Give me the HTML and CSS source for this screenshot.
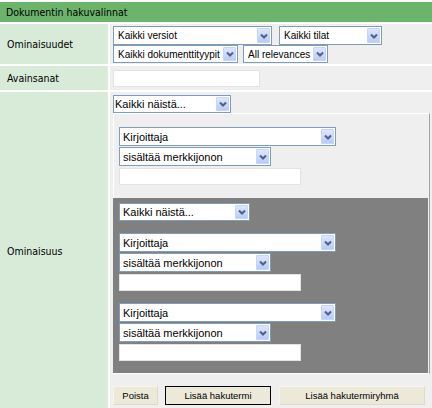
FILE: index.html
```html
<!DOCTYPE html>
<html lang="fi">
<head>
<meta charset="utf-8">
<title>Dokumentin hakuvalinnat</title>
<link rel="stylesheet" href="styles.css">
</head>
<body>
<div class="form">
  <div class="head">Dokumentin hakuvalinnat</div>

  <div class="label">Ominaisuudet</div>
  <div class="cell c1">
    <div class="line">
      <div class="sel small w159"><span>Kaikki versiot</span><i class="arr"><svg width="8" height="6" viewBox="0 0 8 6"><path d="M1 1.5L4 4.5L7 1.5" fill="none" stroke="#4d6185" stroke-width="2"/></svg></i></div>
      <div class="sel small w103 ml7"><span>Kaikki tilat</span><i class="arr"><svg width="8" height="6" viewBox="0 0 8 6"><path d="M1 1.5L4 4.5L7 1.5" fill="none" stroke="#4d6185" stroke-width="2"/></svg></i></div>
    </div>
    <div class="line">
      <div class="sel small h18 w125"><span>Kaikki dokumenttityypit</span><i class="arr"><svg width="8" height="6" viewBox="0 0 8 6"><path d="M1 1.5L4 4.5L7 1.5" fill="none" stroke="#4d6185" stroke-width="2"/></svg></i></div>
      <div class="sel small h18 w85 ml5"><span>All relevances</span><i class="arr"><svg width="8" height="6" viewBox="0 0 8 6"><path d="M1 1.5L4 4.5L7 1.5" fill="none" stroke="#4d6185" stroke-width="2"/></svg></i></div>
    </div>
  </div>

  <div class="label">Avainsanat</div>
  <div class="cell c2">
    <div class="inp w147"></div>
  </div>

  <div class="label">Ominaisuus</div>
  <div class="cell c3">
    <div class="sel arial h18 w118 tight"><span>Kaikki näistä...</span><i class="arr"><svg width="8" height="6" viewBox="0 0 8 6"><path d="M1 1.5L4 4.5L7 1.5" fill="none" stroke="#4d6185" stroke-width="2"/></svg></i></div>
    <div class="group">
      <div class="term">
        <div class="sel arial w217"><span>Kirjoittaja</span><i class="arr"><svg width="8" height="6" viewBox="0 0 8 6"><path d="M1 1.5L4 4.5L7 1.5" fill="none" stroke="#4d6185" stroke-width="2"/></svg></i></div>
        <div class="sel arial w152 second"><span>sisältää merkkijonon</span><i class="arr"><svg width="8" height="6" viewBox="0 0 8 6"><path d="M1 1.5L4 4.5L7 1.5" fill="none" stroke="#4d6185" stroke-width="2"/></svg></i></div>
        <div class="inp w182 third"></div>
      </div>
      <div class="sub">
        <div class="sel arial h18 w131 subsel"><span>Kaikki näistä...</span><i class="arr"><svg width="8" height="6" viewBox="0 0 8 6"><path d="M1 1.5L4 4.5L7 1.5" fill="none" stroke="#4d6185" stroke-width="2"/></svg></i></div>
        <div class="term">
          <div class="sel arial w217"><span>Kirjoittaja</span><i class="arr"><svg width="8" height="6" viewBox="0 0 8 6"><path d="M1 1.5L4 4.5L7 1.5" fill="none" stroke="#4d6185" stroke-width="2"/></svg></i></div>
          <div class="sel arial w152 second"><span>sisältää merkkijonon</span><i class="arr"><svg width="8" height="6" viewBox="0 0 8 6"><path d="M1 1.5L4 4.5L7 1.5" fill="none" stroke="#4d6185" stroke-width="2"/></svg></i></div>
          <div class="inp w182 third"></div>
        </div>
        <div class="term">
          <div class="sel arial w217"><span>Kirjoittaja</span><i class="arr"><svg width="8" height="6" viewBox="0 0 8 6"><path d="M1 1.5L4 4.5L7 1.5" fill="none" stroke="#4d6185" stroke-width="2"/></svg></i></div>
          <div class="sel arial w152 second"><span>sisältää merkkijonon</span><i class="arr"><svg width="8" height="6" viewBox="0 0 8 6"><path d="M1 1.5L4 4.5L7 1.5" fill="none" stroke="#4d6185" stroke-width="2"/></svg></i></div>
          <div class="inp w182 third"></div>
        </div>
      </div>
    </div>
    <div class="btns">
      <div class="btn b45">Poista</div>
      <div class="btn b106 focus">Lisää hakutermi</div>
      <div class="btn b146">Lisää hakutermiryhmä</div>
    </div>
  </div>
</div>
</body>
</html>
```

FILE: styles.css
```css
body {
  margin: 0;
  background: #fff;
  color: #000;
  font-family: "DejaVu Sans Condensed", "Liberation Sans", sans-serif;
  font-size: 10.5px;
}

.form {
  display: grid;
  grid-template-columns: 108px 1fr;
  gap: 2px;
  padding-top: 2px;
}

.head {
  grid-column: 1 / -1;
  background: #6cb36c;
  height: 20px;
  line-height: 20px;
  padding-left: 6px;
}

.label {
  background: #d8ead8;
  display: flex;
  align-items: center;
  padding-left: 7px;
}

.cell {
  background: #efefef;
  padding: 2px 2px 1px 3px;
}

.c2 {
  padding: 4px 3px 3px;
}

.c3 {
  padding: 3px 2px 4px 3px;
}

.line {
  display: flex;
}

.sel {
  display: flex;
  align-items: center;
  box-sizing: border-box;
  height: 19px;
  border: 1px solid #7f9db9;
  background: #fff;
  padding-left: 4px;
}

.sel span {
  flex: 1;
  white-space: nowrap;
  overflow: hidden;
}

.sel.small {
  font-family: "Liberation Sans", Arial, sans-serif;
  font-size: 10px;
  padding-left: 4px;
}

.sel.arial {
  font-family: "Liberation Sans", Arial, sans-serif;
  font-size: 11px;
  padding-left: 3px;
}

.sel.tight {
  padding-left: 1px;
}

.h18 {
  height: 18px;
}

.arr {
  display: flex;
  align-items: center;
  justify-content: center;
  box-sizing: border-box;
  width: 15px;
  height: 100%;
  border: 1px solid #fff;
  background: linear-gradient(#dfe8fe, #b6caf7);
  box-shadow: inset 0 0 0 1px #c6d6fb;
  border-radius: 2px;
  flex: none;
}

.w159 { width: 159px; }
.w103 { width: 103px; }
.w125 { width: 125px; }
.w85 { width: 85px; }
.w118 { width: 118px; }
.w131 { width: 131px; }
.w217 { width: 217px; }
.w152 { width: 152px; }
.w147 { width: 147px; }
.w182 { width: 182px; }
.ml7 { margin-left: 7px; }
.ml5 { margin-left: 5px; }

.inp {
  box-sizing: border-box;
  height: 17px;
  border: 1px solid #e3e3e3;
  background: #fff;
}

.group {
  border: 1px solid;
  border-color: #fff #a3a3a3 #fff #fff;
  padding-top: 13px;
}

.term {
  margin-left: 5px;
}

.term .second {
  margin-top: 1px;
}

.term .third {
  margin-top: 2px;
}

.group > .term {
  margin-bottom: 13px;
}

.sub {
  background: #808080;
  padding: 5px 0 12px;
  margin: 0 1px 0 -1px;
}

.subsel {
  margin-left: 6px;
}

.sub .term {
  margin-left: 6px;
  margin-top: 12px;
}

.btns {
  display: flex;
  margin-top: 12px;
}

.btn {
  box-sizing: border-box;
  height: 19px;
  display: flex;
  align-items: center;
  justify-content: center;
  background: #ece9d8;
  border: 1px solid;
  border-color: #f6f5ee #dedac8 #dedac8 #f6f5ee;
  font-family: "Liberation Sans", Arial, sans-serif;
  font-size: 9.5px;
}

.btn.focus {
  border-color: #000;
}

.b45 { width: 45px; margin-right: 7px; }
.b106 { width: 106px; margin-right: 8px; }
.b146 { width: 146px; }
```
